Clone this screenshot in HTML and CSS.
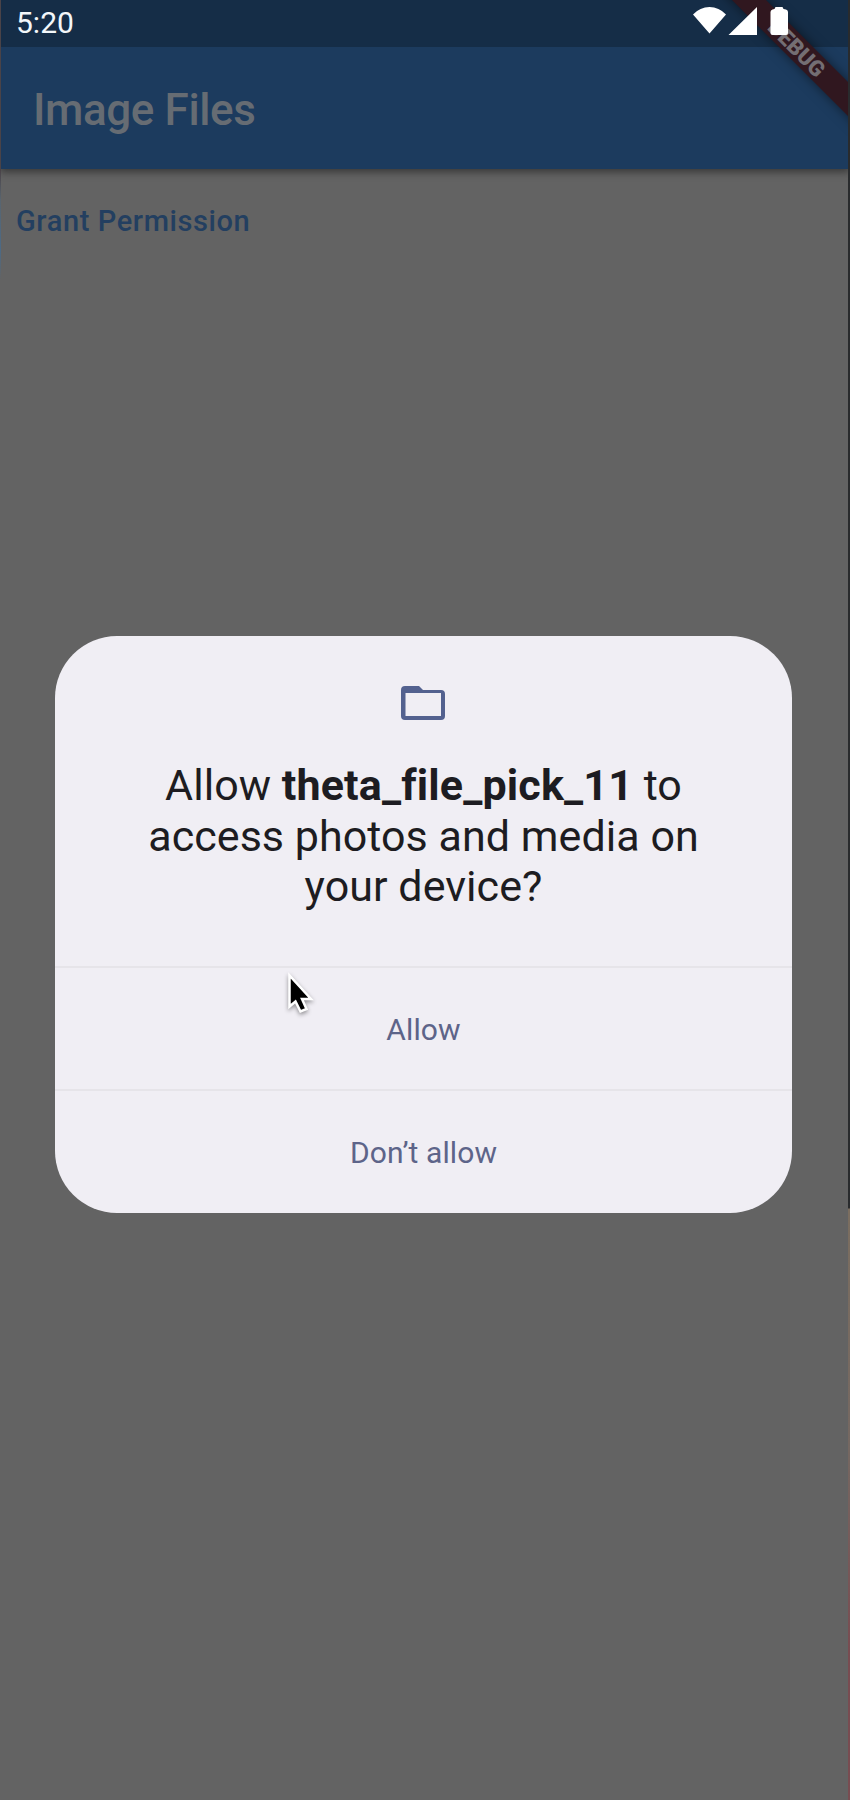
FILE: index.html
```html
<!DOCTYPE html>
<html lang="en">
<head>
<meta charset="utf-8">
<title>Image Files</title>
<link rel="stylesheet" href="styles.css">
</head>
<body>
<div class="screen">
  <header class="statusbar">
    <span class="clock">5:20</span>
    <svg class="status-icons" width="96" height="30" viewBox="0 0 96 30">
      <path fill="#fff" d="M0 7.500 Q7 0 16.500 0 T33 7.500 L16.500 26.500Z M35.500 28 L64 0V28Z M77.500 5q0-2 2-2.500l2-.5 1-2h7l1 2 2.500.5q2 .5 2 2.500v21q0 2-2 2H79.500q-2 0-2-2Z"/>
    </svg>
  </header>
  <div class="appbar"><h1 class="app-title">Image Files</h1></div>
  <main class="content">
    <button class="grant">Grant Permission</button>
  </main>
  <div class="ribbon-clip"><div class="ribbon">DEBUG</div></div>
  <div class="edge-left"></div>
  <div class="edge-right"></div>
  <section class="dialog">
    <div class="message">
      <svg class="folder" width="46" height="36" viewBox="0 0 46 36">
        <path fill="#53618f" fill-rule="evenodd" d="M4 0H18L22 4H40Q44 4 44 8V30Q44 34 40 34H4Q0 34 0 30V4Q0 0 4 0ZM4.500 7V30H40V7Z"/>
      </svg>
      <p class="question"><span class="line">Allow <b>theta_file_pick_11</b> to</span><span class="line">access photos and media on</span><span class="line">your device?</span></p>
    </div>
    <button class="choice">Allow</button>
    <button class="choice choice-last">Don’t allow</button>
  </section>
  <svg class="pointer" width="36" height="52" viewBox="0 0 36 52">
    <path fill="#000" stroke="#fff" stroke-width="2.500" d="M4.500 3.500V34.500L10.500 29.500L15.500 39.500L21.500 37L17 27H26Z"/>
  </svg>
</div>
</body>
</html>
```
FILE: styles.css
```css
body {
  margin: 0;
}

.screen {
  position: relative;
  display: flex;
  flex-direction: column;
  width: 850px;
  height: 1800px;
  overflow: hidden;
  background: #636363;
  font-family: Roboto, "Liberation Sans", sans-serif;
}

.statusbar {
  position: relative;
  display: flex;
  justify-content: space-between;
  box-sizing: border-box;
  height: 47px;
  padding: 7px 61px 0 16px;
  background: #152d47;
  color: #f3f7fa;
}

.clock {
  font-size: 30px;
  line-height: 32px;
}

.status-icons {
  position: relative;
  z-index: 3;
}

.appbar {
  display: flex;
  align-items: center;
  box-sizing: border-box;
  height: 122px;
  padding: 4px 33px 0;
  background: #1c3b5e;
  box-shadow: 0 3px 8px rgba(0, 0, 0, 0.45);
}

.app-title {
  margin: 0;
  color: #666c73;
  font-size: 44px;
  font-weight: 500;
  line-height: 52px;
  letter-spacing: -0.4px;
}

.content {
  display: flex;
  align-items: flex-start;
  padding: 34px 16px;
}

.grant {
  padding: 0;
  border: 0;
  background: none;
  color: #233f60;
  font: 500 29px/36px Roboto, "Liberation Sans", sans-serif;
  letter-spacing: 0.6px;
}

.ribbon-clip {
  position: absolute;
  top: 0;
  right: 1px;
  z-index: 2;
  width: 140px;
  height: 140px;
  overflow: hidden;
}

.ribbon {
  position: absolute;
  top: 36px;
  left: -12px;
  width: 200px;
  height: 24px;
  background: #30171f;
  box-shadow: 0 0 12px rgba(0, 0, 0, 0.5);
  color: #746e73;
  font-size: 22px;
  font-weight: 900;
  line-height: 25px;
  text-align: center;
  transform: rotate(45deg);
}

.edge-left {
  position: absolute;
  top: 0;
  left: 0;
  width: 1px;
  height: 1800px;
  background: linear-gradient(#4a4348 0 170px, #59656f 200px, #4c6a86 250px, #636363 280px);
}

.edge-right {
  position: absolute;
  top: 0;
  right: 0;
  z-index: 3;
  width: 2px;
  height: 1800px;
  background: linear-gradient(#292b2d 0 1208px, #7b6e60 1209px, #756862 1450px, #784c51 1650px, #784c51);
}

.dialog {
  position: absolute;
  top: 636px;
  left: 55px;
  display: flex;
  flex-direction: column;
  width: 737px;
  height: 577px;
  overflow: hidden;
  border-radius: 62px;
  background: #f0eef4;
}

.message {
  display: flex;
  flex: 1;
  flex-direction: column;
  align-items: center;
  padding-top: 50px;
}

.folder {
  flex: none;
}

.question {
  display: flex;
  flex-direction: column;
  margin: 38px 0 0;
  color: #1d1c21;
  font-size: 43px;
  line-height: 50.5px;
  letter-spacing: 0.05px;
  text-align: center;
  white-space: nowrap;
}

.question b {
  letter-spacing: 0.15px;
}

.choice {
  box-sizing: border-box;
  height: 123px;
  padding: 2px 0 0;
  border: 0;
  border-top: 2px solid #e6e4e9;
  background: none;
  color: #5d6489;
  font: 400 30px/36px Roboto, "Liberation Sans", sans-serif;
  letter-spacing: 0.1px;
}

.choice-last {
  height: 124px;
}

.pointer {
  position: absolute;
  top: 972px;
  left: 285px;
  filter: drop-shadow(0 2px 2px rgba(0, 0, 0, 0.4));
}
```
